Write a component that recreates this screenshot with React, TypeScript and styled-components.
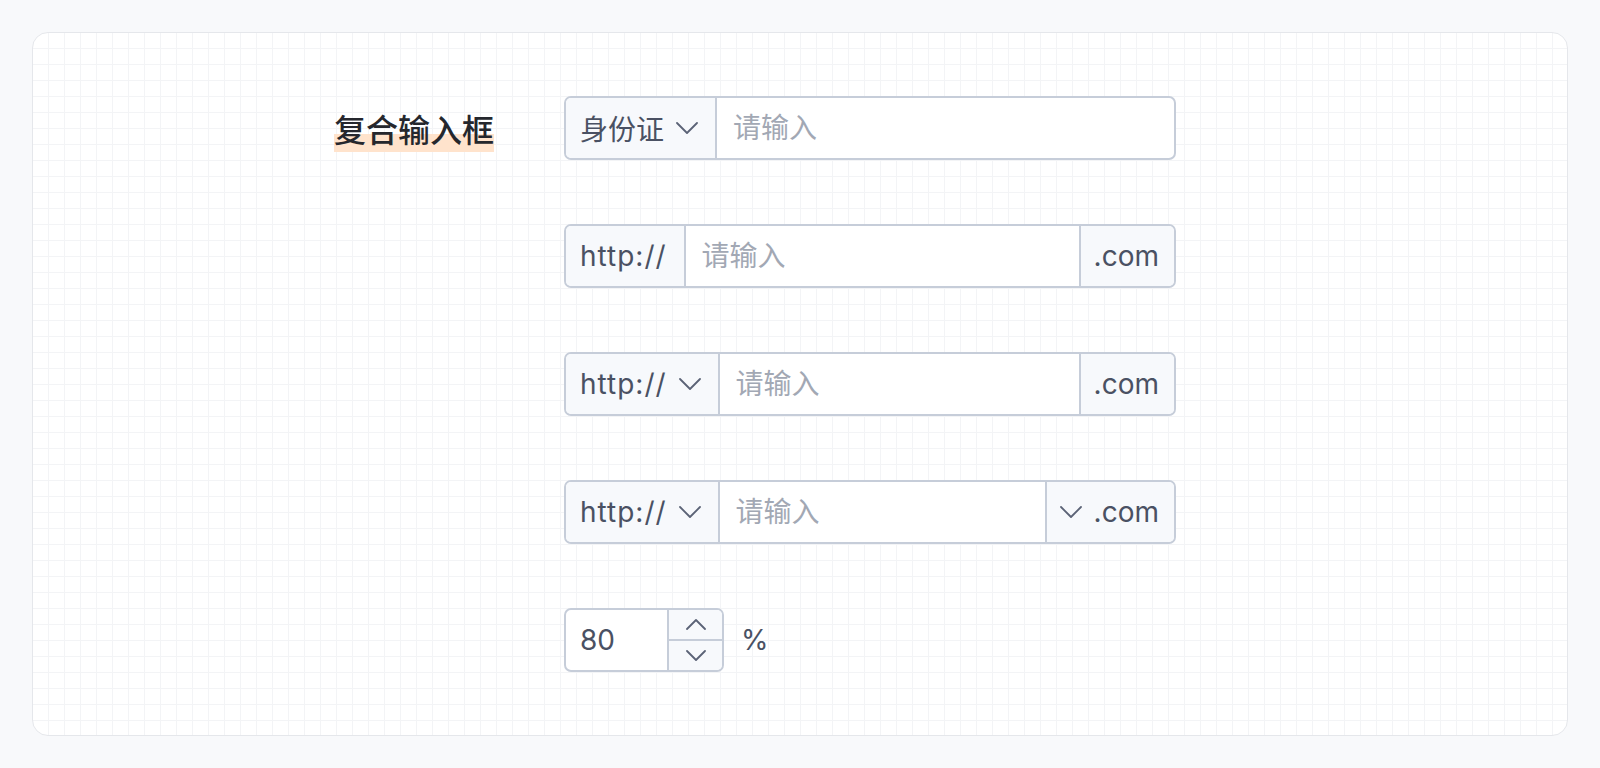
import React from "react";
import styled, { createGlobalStyle } from "styled-components";

const GlobalStyle = createGlobalStyle`
  html, body { margin: 0; padding: 0; background: #f8f9fb; }
  body { font-family: Inter, "Noto Sans CJK SC", sans-serif; }
  * { box-sizing: border-box; }
`;

const Page = styled.div`
  padding: 32px;
  min-height: 768px;
`;

const Card = styled.div`
  border: 1px solid #e5e7eb;
  border-radius: 16px;
  background-color: #ffffff;
  background-image: linear-gradient(to right, transparent 15px, #f3f4f6 15px),
    linear-gradient(to bottom, transparent 15px, #f3f4f6 15px);
  background-size: 16px 16px;
  padding: 63px 0;
  display: grid;
  grid-template-columns: 461px 612px;
  column-gap: 70px;
  align-items: start;
`;

const LabelCell = styled.div`
  height: 64px;
  display: flex;
  align-items: center;
  justify-content: flex-end;
`;

const Label = styled.span`
  display: inline-block;
  font-family: "Noto Sans CJK SC", sans-serif;
  font-size: 32px;
  font-weight: 500;
  line-height: 48px;
  color: #25272d;
  background: linear-gradient(to bottom, transparent 30px, #ffe3cc 30px);
`;

const Controls = styled.div`
  display: flex;
  flex-direction: column;
  gap: 64px;
`;

const Group = styled.div<{ $width?: number }>`
  display: flex;
  align-items: stretch;
  width: ${(p) => p.$width ?? 612}px;
  height: 64px;
  border: 2px solid #c6cdd9;
  border-radius: 7px;
  overflow: hidden;
  background: #ffffff;
  font-size: 28px;
  color: #4a5163;
`;

const Addon = styled.div<{ $side: "left" | "right" }>`
  display: flex;
  align-items: center;
  gap: 12px;
  padding: ${(p) => (p.$side === "left" ? "0 17px 0 14px" : "0 15px 0 13px")};
  background: #f7f9fc;
  ${(p) =>
    p.$side === "left"
      ? "border-right: 2px solid #c6cdd9;"
      : "border-left: 2px solid #c6cdd9;"}
  white-space: nowrap;
  cursor: pointer;
`;

const Scheme = styled.span`
  letter-spacing: 1px;
`;

const TextInput = styled.input`
  flex: 1;
  min-width: 0;
  border: none;
  outline: none;
  background: transparent;
  font: inherit;
  color: inherit;
  padding: 0 16px;
  &::placeholder {
    color: #a2a8b4;
  }
`;

const NumberRow = styled.div`
  display: flex;
  align-items: center;
  gap: 17px;
  font-size: 28px;
  color: #4a5163;
`;

const NumberInput = styled.input`
  flex: 1;
  min-width: 0;
  border: none;
  outline: none;
  background: transparent;
  font: inherit;
  color: inherit;
  padding: 0 14px;
`;

const Stepper = styled.div`
  width: 55px;
  display: flex;
  flex-direction: column;
  border-left: 2px solid #c6cdd9;
  background: #f7f9fc;
`;

const StepButton = styled.div<{ $top?: boolean }>`
  flex: 1;
  display: flex;
  align-items: center;
  justify-content: center;
  ${(p) => (p.$top ? "border-bottom: 2px solid #c6cdd9;" : "")}
`;

const Unit = styled.span`
  font-size: 28px;
  color: #4a5163;
`;

const Chevron = ({ up = false, w = 22, h = 12 }: { up?: boolean; w?: number; h?: number }) => (
  <svg width={w} height={h} viewBox={`0 0 ${w} ${h}`} fill="none">
    <polyline
      points={up ? `1,${h - 1} ${w / 2},1 ${w - 1},${h - 1}` : `1,1 ${w / 2},${h - 1} ${w - 1},1`}
      stroke="#5b6376"
      strokeWidth="1.8"
      strokeLinecap="round"
      strokeLinejoin="round"
    />
  </svg>
);

export default function App() {
  return (
    <>
      <GlobalStyle />
      <Page>
        <Card>
          <LabelCell>
            <Label>复合输入框</Label>
          </LabelCell>
          <Controls>
            <Group>
              <Addon $side="left">
                身份证
                <Chevron />
              </Addon>
              <TextInput placeholder="请输入" />
            </Group>
            <Group>
              <Addon $side="left">
                <Scheme>http://</Scheme>
              </Addon>
              <TextInput placeholder="请输入" />
              <Addon $side="right">.com</Addon>
            </Group>
            <Group>
              <Addon $side="left">
                <Scheme>http://</Scheme>
                <Chevron />
              </Addon>
              <TextInput placeholder="请输入" />
              <Addon $side="right">.com</Addon>
            </Group>
            <Group>
              <Addon $side="left">
                <Scheme>http://</Scheme>
                <Chevron />
              </Addon>
              <TextInput placeholder="请输入" />
              <Addon $side="right">
                <Chevron />
                .com
              </Addon>
            </Group>
            <NumberRow>
              <Group $width={160}>
                <NumberInput defaultValue="80" />
                <Stepper>
                  <StepButton $top>
                    <Chevron up w={20} h={11} />
                  </StepButton>
                  <StepButton>
                    <Chevron w={20} h={11} />
                  </StepButton>
                </Stepper>
              </Group>
              <Unit>%</Unit>
            </NumberRow>
          </Controls>
        </Card>
      </Page>
    </>
  );
}
